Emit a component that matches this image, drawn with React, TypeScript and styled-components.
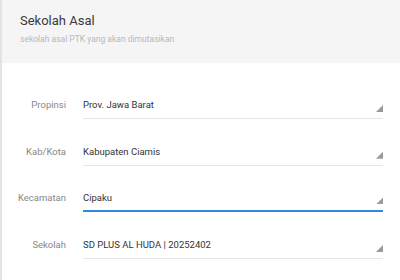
import styled, { createGlobalStyle } from "styled-components";

const GlobalStyle = createGlobalStyle`
  html, body {
    margin: 0;
    padding: 0;
    background: #ffffff;
  }
  body {
    font-family: Roboto, "Liberation Sans", sans-serif;
  }
`;

const fields = [
  { label: "Propinsi", value: "Prov. Jawa Barat", focused: false },
  { label: "Kab/Kota", value: "Kabupaten Ciamis", focused: false },
  { label: "Kecamatan", value: "Cipaku", focused: true },
  { label: "Sekolah", value: "SD PLUS AL HUDA | 20252402", focused: false },
];

function App() {
  return (
    <>
      <GlobalStyle />
      <Card>
        <Header>
          <Title>Sekolah Asal</Title>
          <Subtitle>sekolah asal PTK yang akan dimutasikan</Subtitle>
        </Header>
        <Body>
          {fields.map((f) => (
            <Row key={f.label}>
              <Label>{f.label}</Label>
              <Select $focused={f.focused}>
                <span>{f.value}</span>
                <Caret />
              </Select>
            </Row>
          ))}
        </Body>
      </Card>
    </>
  );
}

export default App;

const Card = styled.div`
  width: 400px;
  height: 280px;
  box-sizing: border-box;
  border-left: 2px solid #e3e3e3;
  background: #ffffff;
  overflow: hidden;
`;

const Header = styled.div`
  height: 63px;
  box-sizing: border-box;
  background: #f5f5f5;
  padding: 13px 0 0 18px;
`;

const Title = styled.div`
  font-size: 13px;
  line-height: 16px;
  color: #3a3a3a;
`;

const Subtitle = styled.div`
  margin-top: 5px;
  font-size: 8.5px;
  line-height: 11px;
  color: #b8b8b8;
`;

const Body = styled.div`
  display: flex;
  flex-direction: column;
  gap: 19.7px;
  padding: 29px 17px 0 0;
`;

const Row = styled.div`
  display: grid;
  grid-template-columns: 64px 1fr;
  column-gap: 17px;
  align-items: start;
`;

const Label = styled.div`
  text-align: right;
  font-size: 9.5px;
  line-height: 26px;
  color: #888888;
`;

const Select = styled.div<{ $focused: boolean }>`
  display: flex;
  align-items: center;
  justify-content: space-between;
  height: ${(p) => (p.$focused ? "25px" : "26px")};
  border-bottom: ${(p) => (p.$focused ? "2px solid #2a8be0" : "1px solid #e6e6e6")};
  font-size: 9.5px;
  color: #333333;

  span {
    line-height: 26px;
  }
`;

const Caret = styled.div`
  align-self: flex-end;
  margin-bottom: 6px;
  width: 7px;
  height: 7px;
  background: #9a9a9a;
  clip-path: polygon(100% 0, 100% 100%, 0 100%);
`;
